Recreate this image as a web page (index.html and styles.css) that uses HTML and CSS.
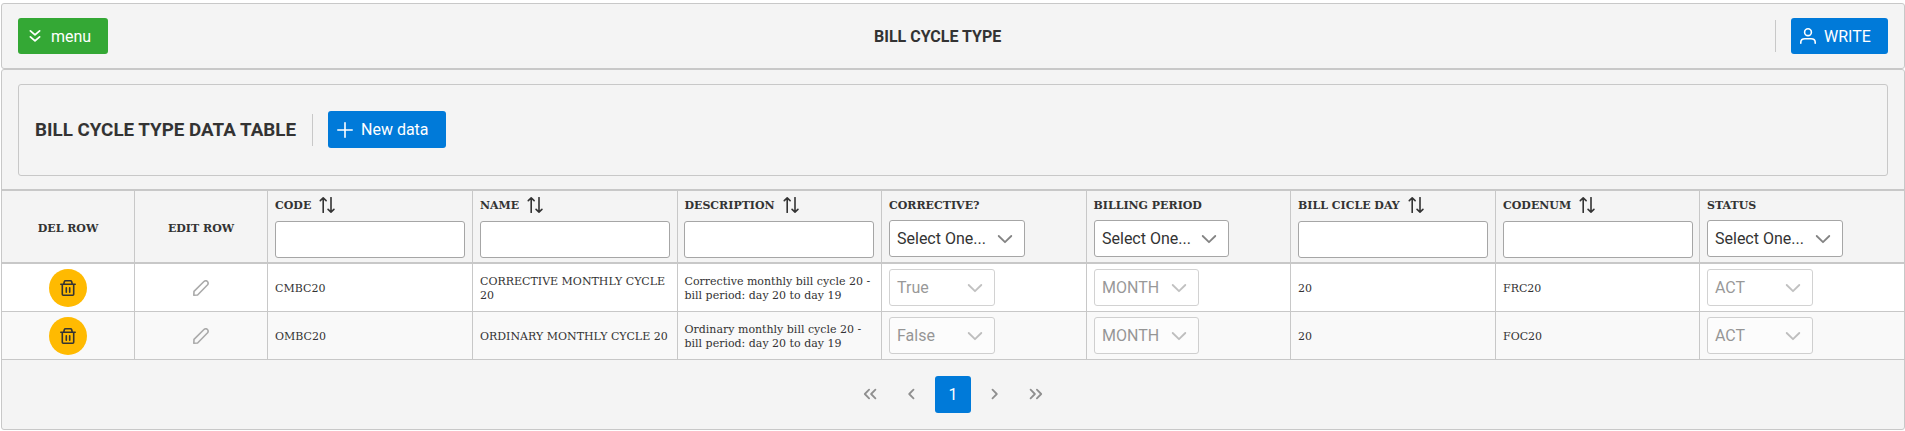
FILE: index.html
```html
<!DOCTYPE html>
<html lang="en">
<head>
<meta charset="utf-8">
<title>Bill cycle type</title>
<link rel="stylesheet" href="styles.css">
</head>
<body>
<svg class="defs" width="0" height="0">
  <symbol id="sort" viewBox="0 0 16 16"><path d="M4.200 15.400V1M1.300 3.600 4.200.9l2.900 2.700M12 .6V15M9.100 12.400 12 15.100l2.900-2.700"/></symbol>
  <symbol id="down" viewBox="0 0 16 16"><path d="M1.700 5 8 11.200 14.300 5"/></symbol>
  <symbol id="trash" viewBox="0 0 16 16"><path d="M.8 4.300h14.400M2.300 4.300v9.900q0 1 1 1h9.400q1 0 1-1V4.300M3.700 4.100 4.300 1.700q.3-.9 1.200-.9h5q.9 0 1.200.9l.6 2.400M6.300 7.700v4.500M9.700 7.700v4.500"/></symbol>
  <symbol id="pencil" viewBox="0 0 16 16"><path d="M.8 15.200 1 11.400 11.200 1.300q1.800-1.200 3.200.2t.2 3.300L4.600 15Z"/></symbol>
</svg>
<header class="panel topbar">
  <div class="side"><button class="btn green"><svg class="ico" viewBox="0 0 16 16"><path d="m3.400 2.900 4.600 4 4.600-4M3.400 8.900l4.600 4 4.600-4"/></svg><span>menu</span></button></div>
  <h1>BILL CYCLE TYPE</h1>
  <div class="side end"><i class="sep"></i><button class="btn write"><svg class="ico" viewBox="0 0 16 16"><circle cx="8" cy="4.200" r="3.400"/><path d="M.8 15.200v-.9Q.8 10.700 5 10.700h6q4.200 0 4.200 3.600v.9"/></svg><span>WRITE</span></button></div>
</header>
<main class="panel content">
  <section class="toolbar">
    <h2>BILL CYCLE TYPE DATA TABLE</h2><i class="sep"></i>
    <button class="btn new"><svg class="ico" viewBox="0 0 16 16"><path d="M8 .8v14.400M.8 8h14.400"/></svg><span>New data</span></button>
  </section>
  <table>
    <colgroup><col class="c133"><col class="c133"><col class="c205"><col class="c205"><col class="c204"><col class="c205"><col class="c204"><col class="c205"><col class="c204"><col class="c204"></colgroup>
    <thead><tr>
      <th class="mid">DEL ROW</th>
      <th class="mid">EDIT ROW</th>
      <th><div class="lbl"><span>CODE</span><svg class="sort"><use href="#sort"/></svg></div><input type="text"></th>
      <th><div class="lbl"><span>NAME</span><svg class="sort"><use href="#sort"/></svg></div><input type="text"></th>
      <th class="desc"><div class="lbl"><span>DESCRIPTION</span><svg class="sort"><use href="#sort"/></svg></div><input type="text"></th>
      <th><div class="lbl"><span>CORRECTIVE?</span></div><div class="dd wide"><span>Select One...</span><svg><use href="#down"/></svg></div></th>
      <th class="period"><div class="lbl"><span>BILLING PERIOD</span></div><div class="dd wide less"><span>Select One...</span><svg><use href="#down"/></svg></div></th>
      <th><div class="lbl"><span>BILL CICLE DAY</span><svg class="sort"><use href="#sort"/></svg></div><input type="text"></th>
      <th><div class="lbl"><span>CODENUM</span><svg class="sort"><use href="#sort"/></svg></div><input type="text"></th>
      <th><div class="lbl"><span>STATUS</span></div><div class="dd wide"><span>Select One...</span><svg><use href="#down"/></svg></div></th>
    </tr></thead>
    <tbody>
      <tr>
        <td><div class="round"><svg><use href="#trash"/></svg></div></td>
        <td><svg class="pencil"><use href="#pencil"/></svg></td>
        <td class="txt">CMBC20</td><td class="txt">CORRECTIVE MONTHLY CYCLE 20</td>
        <td class="txt desc">Corrective monthly bill cycle 20 - bill period: day 20 to day 19</td>
        <td><div class="dd off"><span>True</span><svg><use href="#down"/></svg></div></td>
        <td><div class="dd off less"><span>MONTH</span><svg><use href="#down"/></svg></div></td>
        <td class="txt">20</td><td class="txt">FRC20</td>
        <td><div class="dd off"><span>ACT</span><svg><use href="#down"/></svg></div></td>
      </tr>
      <tr>
        <td><div class="round"><svg><use href="#trash"/></svg></div></td>
        <td><svg class="pencil"><use href="#pencil"/></svg></td>
        <td class="txt">OMBC20</td><td class="txt">ORDINARY MONTHLY CYCLE 20</td>
        <td class="txt desc">Ordinary monthly bill cycle 20 - bill period: day 20 to day 19</td>
        <td><div class="dd off"><span>False</span><svg><use href="#down"/></svg></div></td>
        <td><div class="dd off less"><span>MONTH</span><svg><use href="#down"/></svg></div></td>
        <td class="txt">20</td><td class="txt">FOC20</td>
        <td><div class="dd off"><span>ACT</span><svg><use href="#down"/></svg></div></td>
      </tr>
    </tbody>
  </table>
  <nav class="pager">
    <svg class="far" viewBox="0 0 16 16"><path d="M7.100 3.700 2.800 8l4.300 4.300M13.400 3.700 9.100 8l4.300 4.300"/></svg>
    <svg viewBox="0 0 16 16"><path d="M10.500 3.700 6.200 8l4.300 4.300"/></svg>
    <b>1</b>
    <svg viewBox="0 0 16 16"><path d="M5.500 3.700 9.800 8l-4.300 4.300"/></svg>
    <svg class="far" viewBox="0 0 16 16"><path d="M2.600 3.700 6.900 8l-4.300 4.300M8.900 3.700 13.200 8l-4.300 4.300"/></svg>
  </nav>
</main>
</body>
</html>
```
FILE: styles.css
```css
* { box-sizing: border-box; }
body { margin: 0; padding: 3px 0 1px 1px; background: #fff; color: #333; font-family: Roboto, sans-serif; font-size: 16px; }
svg { fill: none; stroke: currentColor; stroke-width: 1.6; stroke-linecap: round; stroke-linejoin: round; flex: none; }
.defs { display: none; }
.panel { background: #f4f4f4; border: 1px solid #c8c8c8; border-radius: 3px; }
.topbar { height: 66px; padding: 0 16px; display: flex; align-items: center; }
.side { flex: 1; display: flex; align-items: center; }
.side:first-child { flex: 0 0 856px; }
.end { justify-content: flex-end; }
h1 { margin: 0; padding-top: 1px; font-size: 16px; font-weight: 700; line-height: 20px; }
h2 { margin: 0; font-size: 18.8px; font-weight: 700; width: 261px; white-space: nowrap; }
.sep { width: 1px; height: 32px; background: #c8c8c8; }
.btn { height: 36px; border: 0; border-radius: 3px; background: #007ad9; color: #fff; font: 16px Roboto, sans-serif; padding: 0 0 0 9px; display: flex; align-items: center; gap: 8px; }
.ico { width: 16px; height: 16px; }
.green { background: #34a835; width: 90px; }
.green .ico { stroke-width: 1.8; }
.write { width: 97px; margin-left: 15px; }
.new { width: 118px; height: 37px; margin: 0 0 1px 15px; }
.content { height: 361px; }
.toolbar { margin: 14px 16px 13px; height: 92px; border: 1px solid #c8c8c8; border-radius: 3px; display: flex; align-items: center; padding-left: 16px; }
.toolbar .sep { margin-left: 16px; }
table { width: 1902px; table-layout: fixed; border-collapse: separate; border-spacing: 0; border-top: 2px solid #c8c8c8; font-family: "DejaVu Serif", serif; font-size: 11px; }
.c133 { width: 133px; } .c204 { width: 204px; } .c205 { width: 205px; }
th, td { border-right: 1px solid #c8c8c8; border-bottom: 1px solid #c8c8c8; padding: 0 7px; text-align: left; line-height: 14px; }
th:last-child, td:last-child { border-right: 0; }
th { height: 73px; border-bottom-width: 2px; vertical-align: top; }
th.mid { text-align: center; vertical-align: middle; padding-top: 5px; }
td { height: 48px; background: #fff; }
td.txt { padding-top: 2px; }
th.desc, td.desc { padding-left: 6.500px; }
.period .lbl { margin-left: -.5px; }
tr:nth-child(2) td { background: #f9f9f9; }
.lbl { height: 29px; padding-bottom: 1px; display: flex; align-items: center; gap: 8px; }
.lbl span { padding-top: 2px; }
.sort { width: 16px; height: 16px; }
input { display: block; width: 190px; height: 37px; margin-top: 1px; border: 1px solid #a6a6a6; border-radius: 3px; background: #fff; }
.desc input { margin-left: -.5px; }
.dd { height: 37px; width: 106px; border: 1px solid #a6a6a6; border-radius: 3px; background: #fff; display: flex; align-items: center; justify-content: space-between; padding: 0 11px 0 7px; font: 16px/19px Roboto, sans-serif; color: #333; }
.dd span { padding-bottom: 1px; }
.dd svg { width: 16px; height: 16px; color: #848484; stroke-width: 1.8; }
.wide { width: 136px; }
.less { width: 105px; }
.wide.less { width: 135px; }
.off { opacity: .5; }
.round { width: 38px; height: 38px; margin: 0 auto; border-radius: 50%; background: #ffba01; display: grid; place-items: center; }
.round svg { width: 16px; height: 16px; }
.pencil { display: block; width: 16px; height: 16px; margin: 0 auto; color: #aaa; }
.pager { height: 69px; display: flex; align-items: center; justify-content: center; gap: 25px; color: #8f8f8f; }
.pager svg { width: 16px; height: 16px; margin-bottom: 1px; stroke-width: 1.8; }
.pager b { width: 36px; height: 37px; margin: 0 -9px; border-radius: 3px; background: #007ad9; color: #fff; font-weight: 400; line-height: 38px; text-align: center; }
```
